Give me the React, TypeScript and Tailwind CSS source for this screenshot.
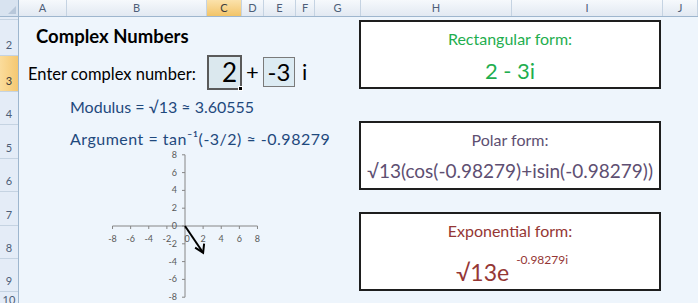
import React from 'react';

const columns = [
  { id: 'A', w: 'w-[48px]' },
  { id: 'B', w: 'w-[140px]' },
  { id: 'C', w: 'w-[35px]', active: true },
  { id: 'D', w: 'w-[22px]' },
  { id: 'E', w: 'w-[32px]' },
  { id: 'F', w: 'w-[19px]' },
  { id: 'G', w: 'w-[46px]' },
  { id: 'H', w: 'w-[151px]' },
  { id: 'I', w: 'w-[151px]' },
  { id: 'J', w: 'flex-1' },
];

const rows = [
  { id: '1', h: 'h-[1px]' },
  { id: '2', h: 'h-[36px]' },
  { id: '3', h: 'h-[36px]', active: true },
  { id: '4', h: 'h-[33px]' },
  { id: '5', h: 'h-[34px]' },
  { id: '6', h: 'h-[33px]' },
  { id: '7', h: 'h-[34px]' },
  { id: '8', h: 'h-[33px]' },
  { id: '9', h: 'h-[33px]' },
  { id: '10', h: 'flex-1' },
];

const ticks = [-8, -6, -4, -2, 0, 2, 4, 6, 8];

// Argand diagram: origin at (166, 76), ~9px per unit
const ArgandChart = () => {
  const ox = 166;
  const oy = 76;
  const sx = 9.06;
  const sy = 8.9;
  const tx = ox + 2 * sx;
  const ty = oy + 3 * sy;
  return (
    <svg width="341" height="153" className="block" style={{ fontFamily: 'Lato, sans-serif' }}>
      <line x1={ox} y1={oy - 8 * sy} x2={ox} y2={oy + 8 * sy} stroke="#868686" strokeWidth="1" />
      <line x1={ox - 8 * sx} y1={oy} x2={ox + 8 * sx} y2={oy} stroke="#868686" strokeWidth="1" />
      {ticks.map((t) => (
        <g key={`y${t}`}>
          <line x1={ox - 3} y1={oy - t * sy} x2={ox} y2={oy - t * sy} stroke="#868686" />
          <text x={ox - 8} y={oy - t * sy + 3} fontSize="9" fill="#595959" textAnchor="end">
            {t}
          </text>
        </g>
      ))}
      {ticks.map((t) => (
        <g key={`x${t}`}>
          <line x1={ox + t * sx} y1={oy} x2={ox + t * sx} y2={oy + 3} stroke="#868686" />
          <text x={ox + t * sx + (t === 0 ? 2 : 0)} y={oy + 16} fontSize="9" fill="#595959" textAnchor="middle">
            {t}
          </text>
        </g>
      ))}
      <line x1={ox} y1={oy} x2={tx} y2={ty} stroke="#000" strokeWidth="2" />
      <polyline
        points={`${tx - 8},${ty - 5} ${tx},${ty} ${tx + 1},${ty - 9}`}
        fill="none"
        stroke="#000"
        strokeWidth="2"
      />
    </svg>
  );
};

const FormBox = ({
  title,
  color,
  children,
  h,
}: {
  title: string;
  color: string;
  children: React.ReactNode;
  h: string;
}) => (
  <div className={`flex ${h} w-[302px] flex-col items-center border-2 border-[#1e1e1e] bg-white ${color}`}>
    <div className="pt-[7px] text-[16px] leading-[20px]">{title}</div>
    {children}
  </div>
);

export default function App() {
  return (
    <div
      className="flex h-[303px] w-[698px] flex-col overflow-hidden bg-[#eef5fc]"
      style={{ fontFamily: 'Lato, "Noto Sans", sans-serif' }}
    >
      {/* column headers */}
      <div className="flex h-[17px] border-b border-[#9eb6ce] bg-gradient-to-b from-[#f6f9fc] to-[#e2e9f2] text-[11px] text-[#4d5e78]">
        <div className="relative w-[19px] border-r border-[#9eb6ce] bg-[#d8e3f0]">
          <div className="absolute bottom-[2px] right-[2px] h-0 w-0 border-b-[8px] border-l-[8px] border-b-[#b7c7da] border-l-transparent" />
        </div>
        {columns.map((c) => (
          <div
            key={c.id}
            className={`flex items-center justify-center border-r border-[#c5d3e2] ${c.w} ${
              c.active ? 'bg-gradient-to-b from-[#fbe2ab] to-[#f2c467] text-[#3d3d3d]' : ''
            }`}
          >
            {c.id}
          </div>
        ))}
      </div>

      <div className="flex flex-1">
        {/* row headers */}
        <div className="flex w-[19px] flex-col border-r border-[#9eb6ce] bg-[#e4ecf7] text-[11px] text-[#4d5e78]">
          {rows.map((r) => (
            <div
              key={r.id}
              className={`flex items-end justify-center overflow-hidden border-b border-[#c5d3e2] pb-[2px] ${r.h} ${
                r.active ? 'bg-gradient-to-r from-[#fbdc9b] to-[#f5c871] text-[#3d3d3d]' : ''
              }`}
            >
              {r.id === '1' ? '' : r.id}
            </div>
          ))}
        </div>

        {/* left area: inputs and chart */}
        <div className="flex w-[340px] flex-col">
          <div className="h-[37px] pl-[17px] pt-[8px] text-[18.5px] font-bold leading-[22px] text-black">
            Complex Numbers
          </div>
          <div className="flex h-[36px] items-center text-[16.5px] text-black">
            <span className="w-[188px] pl-[9px] pt-[4px]">Enter complex number:</span>
            <div className="relative flex h-[35px] w-[35px] items-center justify-end border-2 border-[#5a5a5a] bg-[#dbe8ee] pr-[3px] text-[26px] leading-none">
              2
              <div className="absolute -bottom-[3px] -right-[3px] h-[5px] w-[5px] border border-white bg-black" />
            </div>
            <span className="w-[21px] text-center text-[22px] leading-none">+</span>
            <div className="flex h-[30px] w-[32px] items-center justify-center border border-[#7a7a7a] bg-[#dcebf3] text-[24px] leading-none">
              -3
            </div>
            <span className="pl-[7px] text-[22px] leading-none">i</span>
          </div>
          <div className="h-[33px] pl-[51px] pt-[7px] text-[16px] leading-[20px] text-[#1f497d]">
            Modulus = √13 ≈ 3.60555
          </div>
          <div className="h-[27px] pl-[51px] pt-[6px] text-[16px] leading-[20px] tracking-[0.5px] text-[#1f497d]">
            Argument = tan⁻¹(-3/2) ≈ -0.98279
          </div>
          <ArgandChart />
        </div>

        {/* right area: result boxes */}
        <div className="flex flex-1 flex-col pt-[3px]">
          <FormBox title="Rectangular form:" color="text-[#1fae4f]" h="h-[69px]">
            <div className="pt-[10px] text-[22px] leading-[24px]">2 - 3i</div>
          </FormBox>
          <div className="h-[32px]" />
          <FormBox title="Polar form:" color="text-[#5e4f72]" h="h-[69px]">
            <div className="pt-[10px] text-[19px] leading-[22px]">√13(cos(-0.98279)+isin(-0.98279))</div>
          </FormBox>
          <div className="h-[22px]" />
          <FormBox title="Exponential form:" color="text-[#953735]" h="h-[79px]">
            <div className="flex items-start pl-[4px] pt-[4px]">
              <span className="pt-[14px] text-[23px] leading-[26px]">√13e</span>
              <span className="pl-[7px] pt-[9px] text-[12px] leading-[12px]">-0.98279i</span>
            </div>
          </FormBox>
        </div>
      </div>
    </div>
  );
}
